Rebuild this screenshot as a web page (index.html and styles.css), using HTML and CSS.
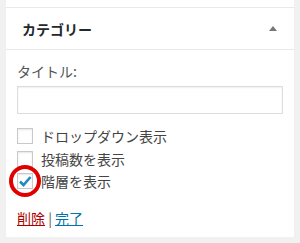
FILE: index.html
```html
<!DOCTYPE html>
<html lang="ja">
<head>
  <meta charset="UTF-8">
  <title>カテゴリー</title>
  <link rel="stylesheet" href="styles.css">
</head>
<body>
  <div class="widget">
    <div class="widget-top">
      <h3 class="widget-title">カテゴリー</h3>
      <span class="toggle"></span>
    </div>
    <div class="widget-inside">
      <label class="field-label" for="title">タイトル:</label>
      <input id="title" class="text-input" type="text">
      <div class="options">
        <label class="option"><span class="box"></span>ドロップダウン表示</label>
        <label class="option"><span class="box"></span>投稿数を表示</label>
        <label class="option">
          <span class="box">
            <svg width="14" height="12" viewBox="0 0 14 12"><path d="M2 6.5 L5.5 10 L12.5 2" fill="none" stroke="#1e8cbe" stroke-width="2.6"/></svg>
            <span class="ring"></span>
          </span>階層を表示
        </label>
      </div>
      <div class="actions">
        <a class="delete" href="#">削除</a> | <a class="done" href="#">完了</a>
      </div>
    </div>
  </div>
</body>
</html>
```
FILE: styles.css
```css
body {
  margin: 0;
  background: #f1f1f1;
  font-family: "Noto Sans CJK JP", "Noto Sans", sans-serif;
  color: #444;
}
.widget {
  margin: 0 6px;
  padding-top: 7px;
  background: #fff;
  box-shadow: 0 1px 1px rgba(0, 0, 0, 0.04);
  height: 230px;
}
.widget-top {
  display: flex;
  align-items: center;
  justify-content: space-between;
  height: 41px;
  border-top: 1px solid #e9e9e9;
  border-bottom: 1px solid #e9e9e9;
  padding: 0 17px 0 16px;
}
.widget-title {
  margin: 0;
  font-size: 14px;
  font-weight: bold;
  color: #23282d;
}
.toggle {
  width: 0;
  height: 0;
  border-left: 4px solid transparent;
  border-right: 4px solid transparent;
  border-bottom: 5px solid #777;
}
.widget-inside {
  padding: 10px 11px 0 11px;
}
.field-label {
  display: block;
  font-size: 14px;
  line-height: 22px;
  color: #555;
}
.text-input {
  display: block;
  box-sizing: border-box;
  width: 100%;
  height: 28px;
  margin: 4px 0 12px;
  border: 1px solid #ddd;
  box-shadow: inset 0 1px 2px rgba(0, 0, 0, 0.07);
}
.options {
  display: flex;
  flex-direction: column;
  gap: 2px;
}
.option {
  display: flex;
  align-items: center;
  gap: 8px;
  font-size: 14px;
  line-height: 20.5px;
  color: #444;
}
.box {
  position: relative;
  box-sizing: border-box;
  width: 16px;
  height: 16px;
  border: 1px solid #c9c9c9;
  box-shadow: inset 0 1px 2px rgba(0, 0, 0, 0.1);
  display: flex;
  align-items: center;
  justify-content: center;
}
.ring {
  position: absolute;
  left: -9px;
  top: -9px;
  box-sizing: border-box;
  width: 32px;
  height: 32px;
  border: 4px solid #e00000;
  border-radius: 50%;
}
.actions {
  margin-top: 16px;
  font-size: 14px;
  line-height: 20px;
  color: #555;
}
.delete {
  color: #a00;
}
.done {
  color: #0073aa;
}
```
